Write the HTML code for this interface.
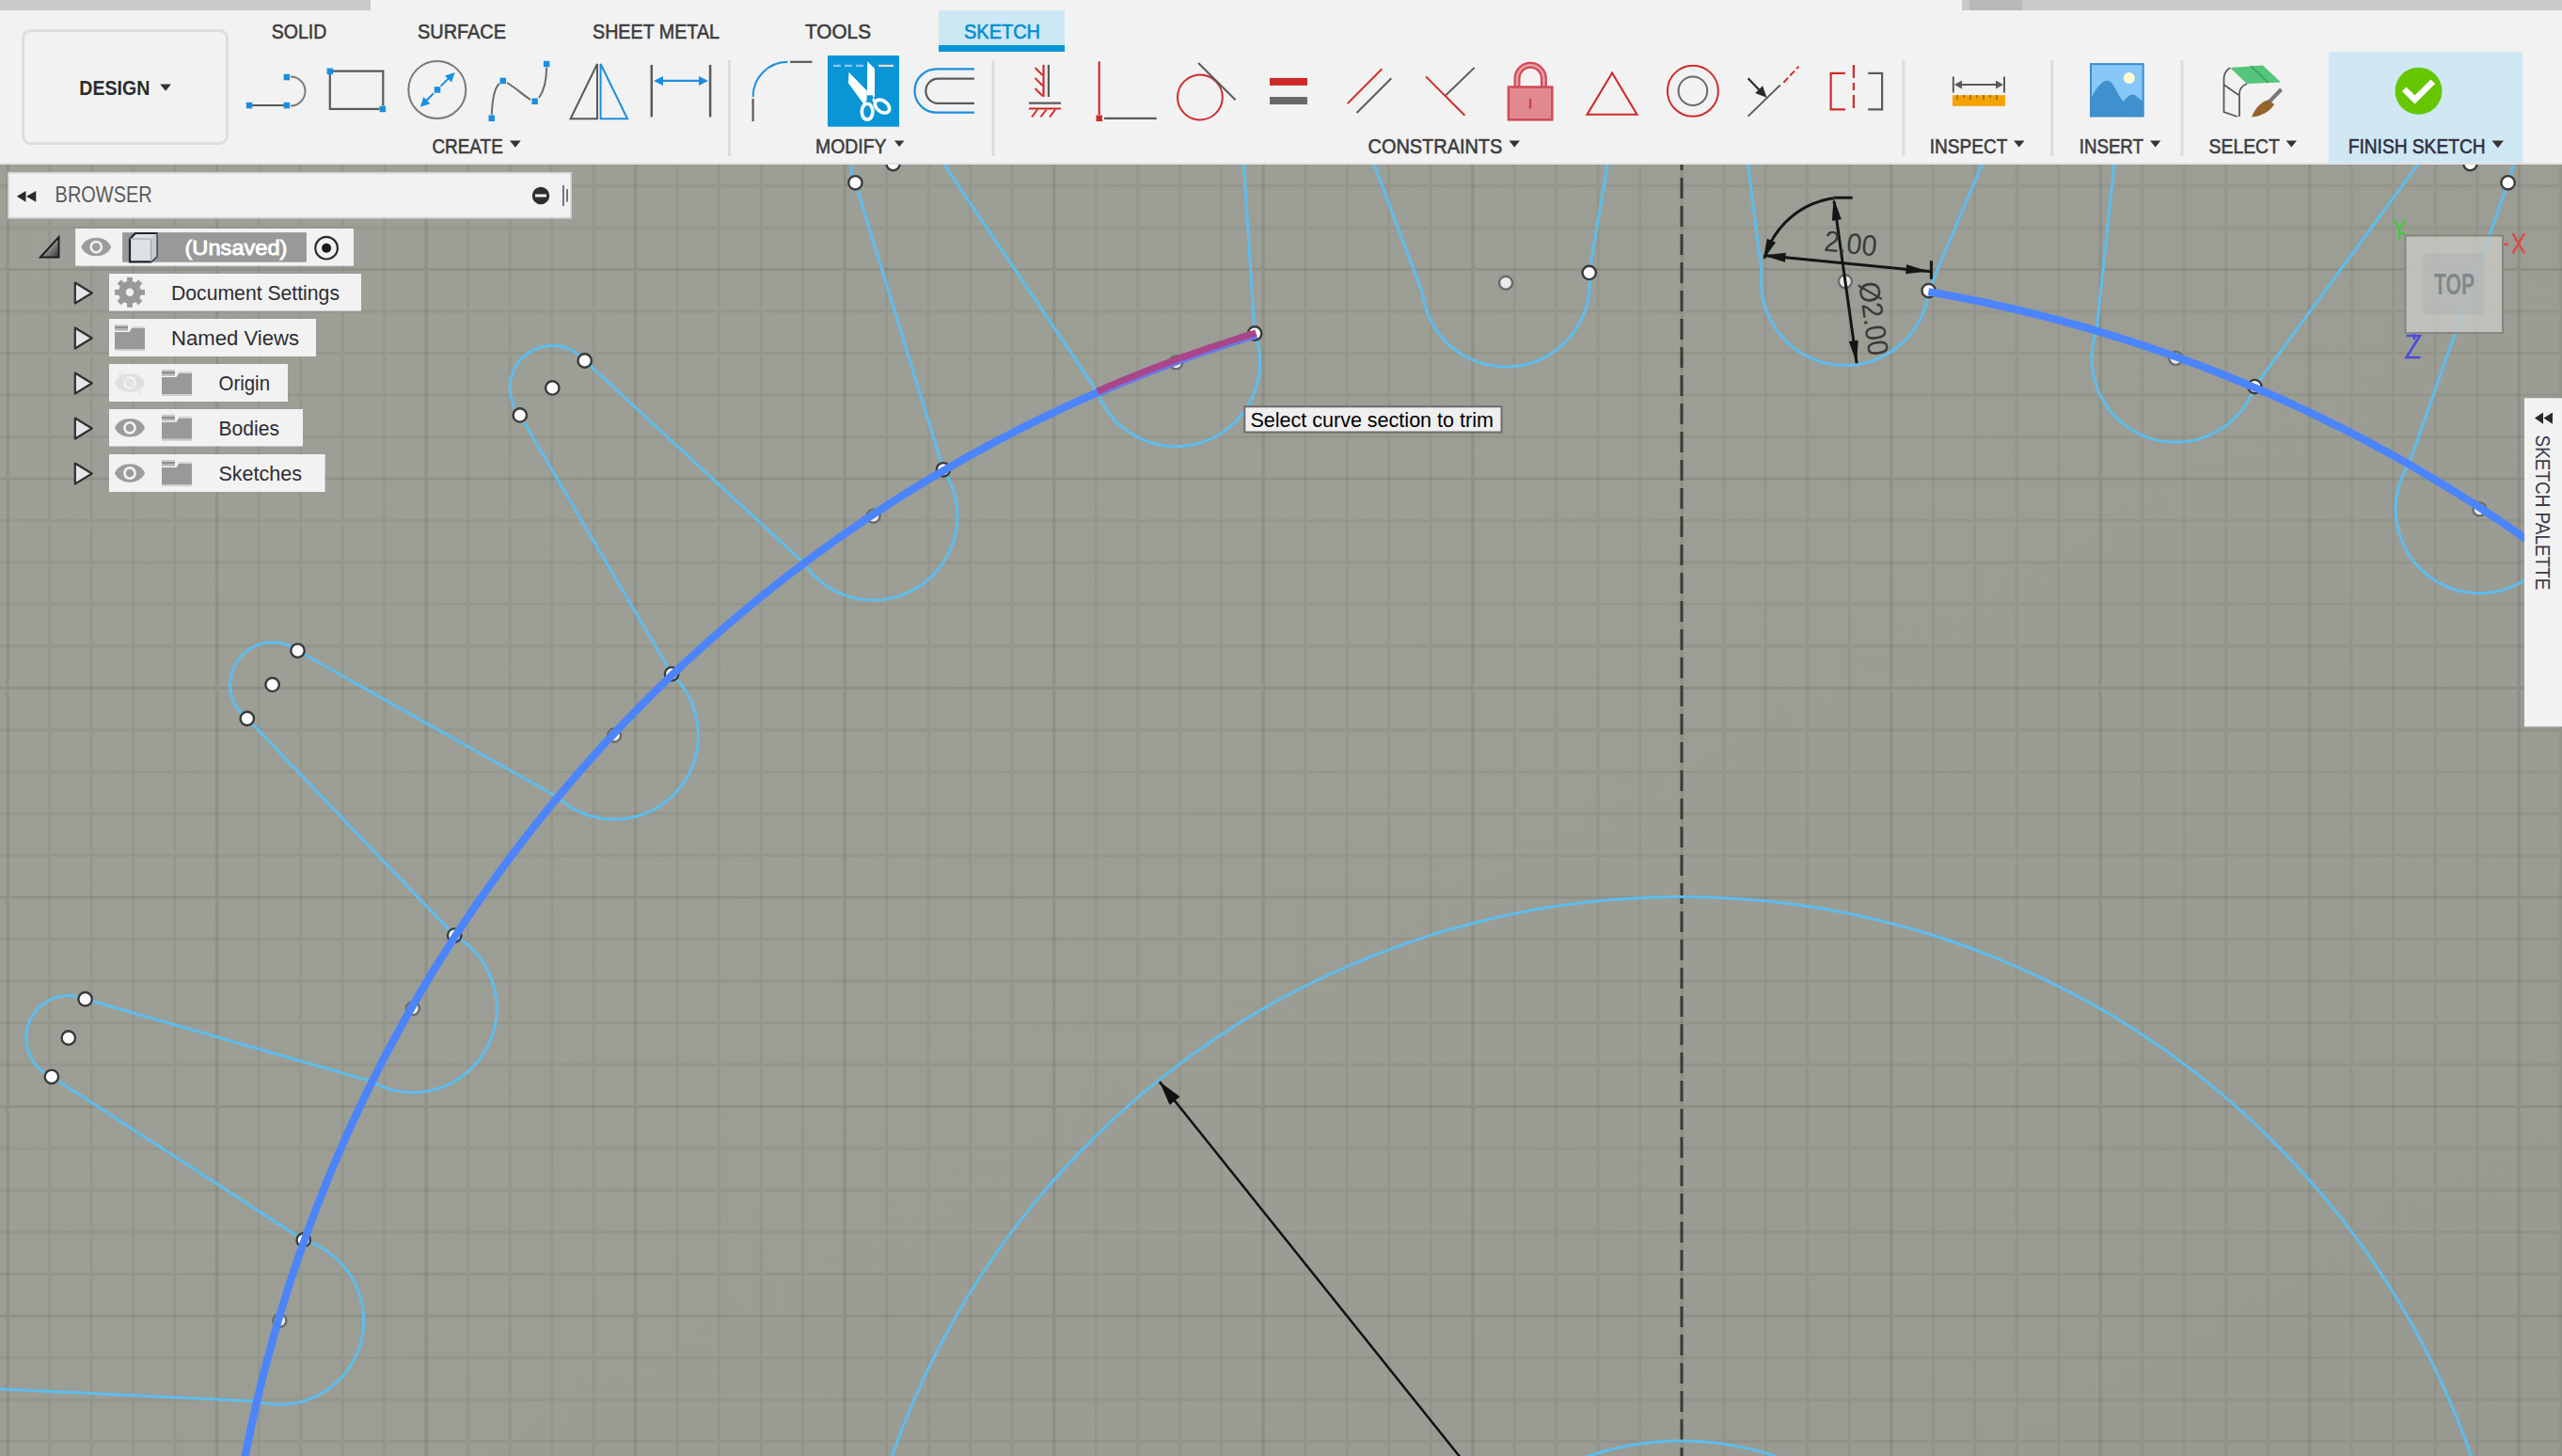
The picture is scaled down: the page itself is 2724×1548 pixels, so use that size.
<!DOCTYPE html><html><head><meta charset="utf-8"><style>
html,body{margin:0;padding:0;width:2724px;height:1548px;overflow:hidden;background:#9d9f96;}
svg{position:absolute;left:0;top:0;display:block}
text{font-family:"Liberation Sans",sans-serif}
</style></head><body>
<svg width="2724" height="1548" viewBox="0 0 2724 1548">
<defs><linearGradient id="cg" x1="0" y1="0" x2="1" y2="1"><stop offset="0" stop-color="#9da097"/><stop offset="0.5" stop-color="#9c9e95"/><stop offset="1" stop-color="#989a91"/></linearGradient></defs>
<rect x="0" y="0" width="2724" height="1548" fill="url(#cg)"/>
<path d="M52.7 175 V1548 M97.2 175 V1548 M141.7 175 V1548 M186.2 175 V1548 M275.2 175 V1548 M319.7 175 V1548 M364.2 175 V1548 M408.7 175 V1548 M497.7 175 V1548 M542.2 175 V1548 M586.7 175 V1548 M631.2 175 V1548 M720.2 175 V1548 M764.7 175 V1548 M809.2 175 V1548 M853.7 175 V1548 M942.7 175 V1548 M987.2 175 V1548 M1031.7 175 V1548 M1076.2 175 V1548 M1165.2 175 V1548 M1209.7 175 V1548 M1254.2 175 V1548 M1298.7 175 V1548 M1387.7 175 V1548 M1432.2 175 V1548 M1476.7 175 V1548 M1521.2 175 V1548 M1610.2 175 V1548 M1654.7 175 V1548 M1699.2 175 V1548 M1743.7 175 V1548 M1832.7 175 V1548 M1877.2 175 V1548 M1921.7 175 V1548 M1966.2 175 V1548 M2055.2 175 V1548 M2099.7 175 V1548 M2144.2 175 V1548 M2188.7 175 V1548 M2277.7 175 V1548 M2322.2 175 V1548 M2366.7 175 V1548 M2411.2 175 V1548 M2500.2 175 V1548 M2544.7 175 V1548 M2589.2 175 V1548 M2633.7 175 V1548 M2722.7 175 V1548 M0 197.5 H2724 M0 242 H2724 M0 331 H2724 M0 375.5 H2724 M0 420 H2724 M0 464.5 H2724 M0 553.5 H2724 M0 598 H2724 M0 642.5 H2724 M0 687 H2724 M0 776 H2724 M0 820.5 H2724 M0 865 H2724 M0 909.5 H2724 M0 998.5 H2724 M0 1043 H2724 M0 1087.5 H2724 M0 1132 H2724 M0 1221 H2724 M0 1265.5 H2724 M0 1310 H2724 M0 1354.5 H2724 M0 1443.5 H2724 M0 1488 H2724 M0 1532.5 H2724" stroke="rgba(10,25,5,0.056)" stroke-width="2.8" fill="none"/>
<path d="M8.2 175 V1548 M230.7 175 V1548 M453.2 175 V1548 M675.7 175 V1548 M898.2 175 V1548 M1120.7 175 V1548 M1343.2 175 V1548 M1565.7 175 V1548 M1788.2 175 V1548 M2010.7 175 V1548 M2233.2 175 V1548 M2455.7 175 V1548 M2678.2 175 V1548 M0 286.5 H2724 M0 509 H2724 M0 731.5 H2724 M0 954 H2724 M0 1176.5 H2724 M0 1399 H2724" stroke="rgba(10,25,5,0.09)" stroke-width="3.2" fill="none"/>
<path d="M1788 175 V1548" stroke="#3a3a38" stroke-width="3" stroke-dasharray="22 8" stroke-dashoffset="-14" fill="none"/>
<circle cx="1788" cy="1843.4" r="890" stroke="#5dbdee" stroke-width="3.0" fill="none"/>
<circle cx="1788" cy="1843.4" r="311.5" stroke="#5dbdee" stroke-width="3.0" fill="none"/>
<path d="M1788 1843.4 L1232.8 1150.1" stroke="#111" stroke-width="2.5"/>
<path d="M1232.8 1150.1 L1243.6 1174.8 L1254.5 1166 Z" fill="#111"/>
<path d="M2852.2 707.5 L2848.9 710.8 L2845.8 714.3 L2842.9 717.9 L2840.1 721.7 L2837.6 725.6 L2835.3 729.7 L2833.1 733.9 L2831.3 738.1 L2829.6 742.5 L2828.1 746.9 L2826.9 751.5 L2826 756 L2825.2 760.7 L2824.8 765.3 L2824.5 770 L2824.5 774.6 L2824.8 779.3 L2825.3 784 L2826 788.6 L2827 793.2 L2828.2 797.7 L2829.7 802.1 L2831.3 806.5 L2833.3 810.7 L2835.4 814.9 L2837.7 819 L2840.3 822.9 L2843 826.6 L2846 830.3 L2849.1 833.7 L2852.4 837 L2855.9 840.2 L2859.5 843.1 L2863.3 845.9 L2867.2 848.4 L2871.3 850.7 L2875.5 852.8 L2879.7 854.7 L2884.1 856.4 L2888.6 857.8 L2893.1 859.1 L2897.6 860 L2902.3 860.7 L2906.9 861.2 L2911.6 861.5 L2916.3 861.5 L2920.9 861.2 L2925.6 860.7 L2930.2 860 L2934.8 859 L2939.3 857.8 L2943.7 856.3 L2948.1 854.6 L2952.4 852.7 L2956.5 850.6 L2960.6 848.3 L2964.5 845.7 L2968.3 843 L2971.9 840 L2975.4 836.9 M2561.6 492.7 L2559.1 496.7 L2556.9 500.8 L2554.9 505 L2553.1 509.3 L2551.5 513.7 L2550.2 518.2 L2549.1 522.7 L2548.2 527.3 L2547.6 532 L2547.2 536.6 L2547.1 541.3 L2547.2 546 L2547.6 550.6 L2548.2 555.3 L2549 559.9 L2550.1 564.4 L2551.4 568.9 L2553 573.3 L2554.8 577.6 L2556.8 581.9 L2559 586 L2561.4 590 L2564.1 593.8 L2566.9 597.5 L2570 601.1 L2573.2 604.5 L2576.6 607.7 L2580.1 610.7 L2583.8 613.6 L2587.7 616.3 L2591.6 618.7 L2595.7 620.9 L2600 623 L2604.3 624.8 L2608.7 626.3 L2613.2 627.7 L2617.7 628.8 L2622.3 629.6 L2626.9 630.2 L2631.6 630.6 L2636.3 630.7 L2640.9 630.6 L2645.6 630.3 L2650.2 629.7 L2654.8 628.8 L2659.4 627.7 L2663.9 626.4 L2668.3 624.9 L2672.6 623.1 L2676.8 621.1 L2680.9 618.8 L2684.9 616.4 L2688.8 613.8 L2692.5 610.9 L2696.1 607.9 L2699.5 604.7 L2702.7 601.3 L2705.7 597.7 L2708.6 594 L2711.2 590.2 M2229.2 350.7 L2227.8 355.1 L2226.6 359.6 L2225.6 364.2 L2224.8 368.8 L2224.3 373.5 L2224 378.1 L2224 382.8 L2224.2 387.5 L2224.7 392.1 L2225.4 396.8 L2226.4 401.3 L2227.6 405.9 L2229 410.3 L2230.6 414.7 L2232.5 419 L2234.6 423.1 L2236.9 427.2 L2239.5 431.1 L2242.2 434.9 L2245.1 438.6 L2248.2 442.1 L2251.5 445.4 L2255 448.5 L2258.6 451.5 L2262.4 454.2 L2266.3 456.8 L2270.3 459.2 L2274.5 461.3 L2278.7 463.2 L2283.1 464.9 L2287.5 466.4 L2292.1 467.6 L2296.6 468.6 L2301.2 469.4 L2305.9 469.9 L2310.6 470.1 L2315.2 470.2 L2319.9 469.9 L2324.6 469.5 L2329.2 468.8 L2333.8 467.8 L2338.3 466.6 L2342.7 465.2 L2347.1 463.5 L2351.4 461.6 L2355.6 459.5 L2359.6 457.2 L2363.5 454.7 L2367.3 452 L2371 449 L2374.5 445.9 L2377.8 442.6 L2380.9 439.2 L2383.9 435.6 L2386.7 431.8 L2389.2 427.9 L2391.6 423.8 L2393.7 419.7 L2395.6 415.4 L2397.3 411.1 M1873.1 289.2 L1872.7 293.8 L1872.6 298.5 L1872.6 303.2 L1873 307.8 L1873.6 312.5 L1874.4 317.1 L1875.4 321.6 L1876.7 326.1 L1878.2 330.5 L1880 334.9 L1882 339.1 L1884.2 343.2 L1886.6 347.2 L1889.2 351.1 L1892 354.8 L1895 358.4 L1898.2 361.8 L1901.6 365.1 L1905.1 368.1 L1908.8 371 L1912.7 373.7 L1916.6 376.2 L1920.7 378.4 L1924.9 380.5 L1929.2 382.3 L1933.6 383.9 L1938.1 385.2 L1942.6 386.4 L1947.2 387.3 L1951.9 387.9 L1956.5 388.3 L1961.2 388.5 L1965.9 388.4 L1970.5 388 L1975.2 387.5 L1979.8 386.6 L1984.3 385.6 L1988.8 384.3 L1993.2 382.8 L1997.6 381 L2001.8 379 L2005.9 376.8 L2009.9 374.4 L2013.8 371.8 L2017.5 369 L2021.1 366 L2024.5 362.8 L2027.8 359.4 L2030.8 355.9 L2033.7 352.2 L2036.4 348.3 L2038.9 344.4 L2041.1 340.3 L2043.2 336.1 L2045 331.8 L2046.6 327.4 L2047.9 322.9 L2049.1 318.4 L2049.9 313.8 L2050.6 309.1 M1512.4 311.4 L1513.1 316.1 L1514 320.6 L1515.2 325.2 L1516.6 329.6 L1518.2 334 L1520 338.3 L1522.1 342.5 L1524.4 346.6 L1526.9 350.5 L1529.6 354.3 L1532.5 358 L1535.6 361.5 L1538.9 364.8 L1542.3 368 L1545.9 371 L1549.7 373.8 L1553.6 376.3 L1557.6 378.7 L1561.8 380.9 L1566 382.8 L1570.4 384.6 L1574.8 386 L1579.3 387.3 L1583.9 388.3 L1588.5 389.1 L1593.1 389.6 L1597.8 389.9 L1602.5 390 L1607.1 389.8 L1611.8 389.3 L1616.4 388.7 L1621 387.7 L1625.5 386.6 L1630 385.2 L1634.4 383.5 L1638.7 381.7 L1642.8 379.6 L1646.9 377.3 L1650.9 374.8 L1654.7 372.1 L1658.3 369.2 L1661.8 366.1 L1665.2 362.8 L1668.3 359.4 L1671.3 355.8 L1674.1 352 L1676.7 348.1 L1679.1 344.1 L1681.2 340 L1683.2 335.7 L1684.9 331.4 L1686.4 326.9 L1687.7 322.4 L1688.7 317.9 L1689.4 313.3 L1690 308.6 L1690.3 303.9 L1690.3 299.3 L1690.1 294.6 L1689.7 289.9 M1166.5 416.3 L1168.3 420.6 L1170.2 424.9 L1172.4 429 L1174.8 433 L1177.4 436.9 L1180.2 440.7 L1183.2 444.3 L1186.3 447.7 L1189.7 451 L1193.2 454 L1196.9 456.9 L1200.7 459.6 L1204.6 462.1 L1208.7 464.4 L1212.9 466.5 L1217.2 468.3 L1221.6 469.9 L1226.1 471.3 L1230.6 472.5 L1235.2 473.4 L1239.8 474.1 L1244.5 474.5 L1249.1 474.7 L1253.8 474.6 L1258.5 474.3 L1263.1 473.8 L1267.7 473 L1272.3 471.9 L1276.8 470.7 L1281.2 469.2 L1285.5 467.4 L1289.8 465.5 L1293.9 463.3 L1297.9 460.9 L1301.8 458.3 L1305.6 455.5 L1309.2 452.5 L1312.6 449.4 L1315.9 446 L1319 442.5 L1321.8 438.8 L1324.5 435 L1327 431.1 L1329.3 427 L1331.4 422.8 L1333.2 418.5 L1334.9 414.1 L1336.2 409.6 L1337.4 405.1 L1338.3 400.5 L1339 395.9 L1339.4 391.2 L1339.6 386.6 L1339.5 381.9 L1339.2 377.2 L1338.7 372.6 L1337.9 368 L1336.9 363.4 L1335.6 358.9 L1334.1 354.5 M854.2 598.1 L856.8 601.9 L859.7 605.6 L862.8 609.1 L866.1 612.5 L869.5 615.7 L873.1 618.7 L876.8 621.5 L880.7 624.1 L884.7 626.5 L888.8 628.7 L893.1 630.6 L897.4 632.4 L901.8 633.9 L906.3 635.2 L910.9 636.2 L915.5 637 L920.1 637.6 L924.8 637.9 L929.5 638 L934.1 637.8 L938.8 637.4 L943.4 636.7 L948 635.8 L952.5 634.7 L957 633.3 L961.4 631.7 L965.7 629.9 L969.9 627.8 L974 625.6 L977.9 623.1 L981.8 620.4 L985.5 617.5 L989 614.4 L992.3 611.2 L995.5 607.8 L998.5 604.2 L1001.3 600.4 L1003.9 596.6 L1006.3 592.6 L1008.5 588.4 L1010.5 584.2 L1012.2 579.9 L1013.8 575.4 L1015 570.9 L1016.1 566.4 L1016.9 561.8 L1017.5 557.1 L1017.8 552.5 L1017.9 547.8 L1017.7 543.1 L1017.3 538.5 L1016.6 533.8 L1015.7 529.2 L1014.6 524.7 L1013.2 520.2 L1011.6 515.9 L1009.8 511.5 L1007.7 507.4 L1005.4 503.3 L1003 499.3 M592.1 847 L595.6 850.1 L599.3 853 L603.1 855.7 L607 858.3 L611.1 860.6 L615.3 862.7 L619.6 864.5 L623.9 866.2 L628.4 867.6 L632.9 868.8 L637.5 869.7 L642.1 870.4 L646.8 870.9 L651.4 871.1 L656.1 871 L660.8 870.8 L665.4 870.2 L670 869.5 L674.6 868.5 L679.1 867.2 L683.6 865.8 L687.9 864 L692.2 862.1 L696.3 860 L700.3 857.6 L704.2 855 L708 852.2 L711.6 849.3 L715.1 846.1 L718.4 842.8 L721.5 839.3 L724.4 835.6 L727.1 831.8 L729.6 827.9 L731.9 823.8 L734 819.7 L735.9 815.4 L737.5 811 L738.9 806.5 L740.1 802 L741.1 797.4 L741.8 792.8 L742.2 788.2 L742.4 783.5 L742.4 778.8 L742.1 774.1 L741.6 769.5 L740.8 764.9 L739.8 760.3 L738.6 755.8 L737.1 751.4 L735.4 747 L733.5 742.8 L731.3 738.6 L728.9 734.6 L726.4 730.7 L723.6 726.9 L720.6 723.3 L717.5 719.9 L714.1 716.6 M394.6 1149.6 L398.7 1151.9 L402.9 1153.9 L407.3 1155.6 L411.7 1157.2 L416.2 1158.5 L420.7 1159.5 L425.3 1160.4 L430 1161 L434.6 1161.3 L439.3 1161.4 L444 1161.3 L448.6 1160.9 L453.3 1160.3 L457.8 1159.4 L462.4 1158.3 L466.9 1156.9 L471.3 1155.4 L475.6 1153.5 L479.8 1151.5 L483.9 1149.3 L487.9 1146.8 L491.7 1144.1 L495.4 1141.3 L498.9 1138.2 L502.3 1135 L505.5 1131.6 L508.5 1128 L511.4 1124.3 L514 1120.4 L516.4 1116.4 L518.6 1112.3 L520.6 1108.1 L522.4 1103.8 L524 1099.4 L525.3 1094.9 L526.3 1090.3 L527.2 1085.7 L527.8 1081.1 L528.1 1076.4 L528.2 1071.7 L528.1 1067.1 L527.7 1062.4 L527 1057.8 L526.2 1053.2 L525.1 1048.6 L523.7 1044.2 L522.1 1039.8 L520.3 1035.5 L518.3 1031.2 L516.1 1027.1 L513.6 1023.2 L510.9 1019.3 L508.1 1015.6 L505 1012.1 L501.8 1008.7 L498.4 1005.5 L494.8 1002.5 L491.1 999.7 L487.2 997 L483.2 994.6 M272.2 1489.7 L276.7 1490.9 L281.2 1491.9 L285.9 1492.6 L290.5 1493.1 L295.2 1493.3 L299.9 1493.3 L304.5 1493 L309.2 1492.6 L313.8 1491.8 L318.4 1490.8 L322.9 1489.6 L327.3 1488.2 L331.7 1486.5 L336 1484.6 L340.1 1482.5 L344.2 1480.1 L348.1 1477.6 L351.9 1474.8 L355.5 1471.9 L359 1468.7 L362.3 1465.4 L365.4 1461.9 L368.3 1458.3 L371.1 1454.5 L373.6 1450.6 L375.9 1446.5 L378.1 1442.4 L380 1438.1 L381.6 1433.7 L383.1 1429.3 L384.3 1424.8 L385.2 1420.2 L386 1415.6 L386.4 1410.9 L386.7 1406.3 L386.7 1401.6 L386.4 1396.9 L385.9 1392.3 L385.2 1387.6 L384.2 1383.1 L383 1378.6 L381.5 1374.1 L379.9 1369.8 L378 1365.5 L375.8 1361.3 L373.5 1357.3 L370.9 1353.4 L368.2 1349.6 L365.2 1345.9 L362.1 1342.5 L358.8 1339.2 L355.3 1336.1 L351.7 1333.1 L347.9 1330.4 L344 1327.8 L339.9 1325.5 L335.7 1323.4 L331.5 1321.5 L327.1 1319.8 L322.7 1318.4 M231.4 1848.8 L236.1 1848.9 L240.8 1848.8 L245.5 1848.5 L250.1 1847.9 L254.7 1847 L259.2 1845.9 L263.7 1844.6 L268.1 1843.1 L272.5 1841.3 L276.7 1839.3 L280.8 1837 L284.8 1834.6 L288.6 1832 L292.3 1829.1 L295.9 1826.1 L299.3 1822.9 L302.5 1819.5 L305.6 1815.9 L308.4 1812.2 L311.1 1808.4 L313.5 1804.4 L315.8 1800.3 L317.8 1796.1 L319.6 1791.8 L321.1 1787.4 L322.5 1782.9 L323.6 1778.3 L324.4 1773.7 L325.1 1769.1 L325.4 1764.4 L325.6 1759.8 L325.4 1755.1 L325.1 1750.4 L324.5 1745.8 L323.6 1741.2 L322.6 1736.7 L321.2 1732.2 L319.7 1727.8 L317.9 1723.4 L315.9 1719.2 L313.7 1715.1 L311.2 1711.1 L308.6 1707.3 L305.7 1703.5 L302.7 1700 L299.5 1696.6 L296.1 1693.4 L292.6 1690.3 L288.9 1687.5 L285 1684.8 L281 1682.4 L276.9 1680.1 L272.7 1678.1 L268.4 1676.3 L264 1674.7 L259.5 1673.4 L255 1672.3 L250.4 1671.5 L245.7 1670.8 L241.1 1670.5 M274.6 2207.6 L279.2 2206.7 L283.7 2205.5 L288.2 2204.1 L292.6 2202.4 L296.9 2200.5 L301 2198.4 L305.1 2196.1 L309 2193.6 L312.8 2190.8 L316.5 2187.9 L319.9 2184.8 L323.3 2181.5 L326.4 2178 L329.4 2174.4 L332.1 2170.7 L334.7 2166.7 L337.1 2162.7 L339.2 2158.6 L341.1 2154.3 L342.8 2149.9 L344.3 2145.5 L345.5 2141 L346.5 2136.4 L347.3 2131.8 L347.8 2127.2 L348 2122.5 L348 2117.8 L347.8 2113.1 L347.4 2108.5 L346.6 2103.9 L345.7 2099.3 L344.5 2094.8 L343.1 2090.3 L341.4 2085.9 L339.5 2081.7 L337.4 2077.5 L335.1 2073.4 L332.6 2069.5 L329.9 2065.7 L326.9 2062.1 L323.8 2058.6 L320.5 2055.2 L317.1 2052.1 L313.4 2049.1 L309.7 2046.4 L305.8 2043.8 L301.7 2041.5 L297.6 2039.3 L293.3 2037.4 L289 2035.7 L284.5 2034.2 L280 2033 L275.4 2032 L270.8 2031.3 L266.2 2030.8 L261.5 2030.5 L256.8 2030.5 L252.2 2030.7 L247.5 2031.2 L242.9 2031.9 M3259.5 691.8 L3262.4 689.8 L3265.5 688.1 L3268.7 686.5 L3272 685.3 L3275.4 684.3 L3278.8 683.5 L3282.3 683.1 L3285.8 682.9 L3289.4 683 L3292.9 683.4 L3296.4 684 L3299.8 685 L3303.1 686.1 L3306.3 687.6 L3309.4 689.3 L3312.4 691.2 L3315.2 693.4 L3317.8 695.7 L3320.2 698.3 L3322.5 701 L3324.5 704 L3326.2 707 L3327.7 710.2 L3329 713.5 L3330 716.9 L3330.7 720.4 L3331.2 723.9 L3331.4 727.4 L3331.3 730.9 L3330.9 734.4 L3330.2 737.9 L3329.3 741.3 L3328.1 744.6 L3326.7 747.9 L3325 751 L3323.1 753.9 L3320.9 756.7 L3318.6 759.4 L3316 761.8 L3313.2 764 M2954.3 383.5 L2956.6 380.9 L2959.2 378.5 L2962 376.3 L2964.9 374.3 L2967.9 372.5 L2971.1 371 L2974.4 369.8 L2977.8 368.8 L2981.3 368 L2984.8 367.6 L2988.3 367.4 L2991.9 367.5 L2995.4 367.9 L2998.9 368.6 L3002.3 369.5 L3005.6 370.7 L3008.8 372.2 L3011.9 373.9 L3014.9 375.8 L3017.7 378 L3020.3 380.3 L3022.7 382.9 L3024.9 385.7 L3026.9 388.6 L3028.6 391.7 L3030.1 394.8 L3031.4 398.2 L3032.4 401.5 L3033.1 405 L3033.6 408.5 L3033.7 412 L3033.6 415.6 L3033.2 419.1 L3032.6 422.6 L3031.6 426 L3030.5 429.3 L3029 432.5 L3027.3 435.6 L3025.4 438.6 L3023.2 441.4 M2586.1 153.9 L2587.9 150.8 L2589.8 147.9 L2592 145.1 L2594.4 142.5 L2596.9 140 L2599.7 137.8 L2602.6 135.9 L2605.7 134.1 L2608.9 132.6 L2612.2 131.4 L2615.6 130.4 L2619.1 129.7 L2622.6 129.3 L2626.1 129.1 L2629.6 129.2 L2633.1 129.6 L2636.6 130.3 L2640 131.2 L2643.3 132.4 L2646.6 133.9 L2649.6 135.6 L2652.6 137.5 L2655.4 139.7 L2658 142.1 L2660.4 144.7 L2662.6 147.4 L2664.6 150.4 L2666.3 153.4 L2667.8 156.6 L2669.1 159.9 L2670.1 163.3 L2670.8 166.8 L2671.2 170.3 L2671.4 173.8 L2671.2 177.4 L2670.8 180.9 L2670.2 184.3 L2669.2 187.8 L2668 191.1 L2666.6 194.3 M2175 15.4 L2176 12 L2177.2 8.7 L2178.6 5.4 L2180.4 2.4 L2182.3 -0.6 L2184.5 -3.4 L2186.9 -6 L2189.5 -8.4 L2192.2 -10.6 L2195.2 -12.5 L2198.2 -14.3 L2201.4 -15.8 L2204.8 -17 L2208.2 -18 L2211.6 -18.7 L2215.1 -19.1 L2218.7 -19.2 L2222.2 -19.1 L2225.7 -18.7 L2229.2 -18 L2232.6 -17.1 L2235.9 -15.9 L2239.1 -14.4 L2242.2 -12.7 L2245.1 -10.7 L2247.9 -8.6 L2250.5 -6.2 L2252.9 -3.6 L2255.1 -0.8 L2257.1 2.1 L2258.8 5.2 L2260.3 8.4 L2261.5 11.7 L2262.5 15.1 L2263.2 18.6 L2263.6 22.1 L2263.8 25.6 L2263.7 29.2 L2263.3 32.7 L2262.6 36.1 M1743 -24.6 L1743.1 -28.1 L1743.6 -31.6 L1744.2 -35.1 L1745.2 -38.5 L1746.4 -41.8 L1747.9 -45 L1749.6 -48.1 L1751.6 -51.1 L1753.8 -53.8 L1756.2 -56.4 L1758.8 -58.8 L1761.5 -61 L1764.5 -63 L1767.6 -64.7 L1770.8 -66.2 L1774.1 -67.4 L1777.5 -68.4 L1781 -69 L1784.5 -69.5 L1788 -69.6 L1791.5 -69.5 L1795 -69 L1798.5 -68.4 L1801.9 -67.4 L1805.2 -66.2 L1808.4 -64.7 L1811.5 -63 L1814.5 -61 L1817.2 -58.8 L1819.8 -56.4 L1822.2 -53.8 L1824.4 -51.1 L1826.4 -48.1 L1828.1 -45 L1829.6 -41.8 L1830.8 -38.5 L1831.8 -35.1 L1832.4 -31.6 L1832.9 -28.1 L1833 -24.6 M1313.4 36.1 L1312.7 32.7 L1312.3 29.2 L1312.2 25.6 L1312.4 22.1 L1312.8 18.6 L1313.5 15.1 L1314.5 11.7 L1315.7 8.4 L1317.2 5.2 L1318.9 2.1 L1320.9 -0.8 L1323.1 -3.6 L1325.5 -6.2 L1328.1 -8.6 L1330.9 -10.7 L1333.8 -12.7 L1336.9 -14.4 L1340.1 -15.9 L1343.4 -17.1 L1346.8 -18 L1350.3 -18.7 L1353.8 -19.1 L1357.3 -19.2 L1360.9 -19.1 L1364.4 -18.7 L1367.8 -18 L1371.2 -17 L1374.6 -15.8 L1377.8 -14.3 L1380.8 -12.5 L1383.8 -10.6 L1386.5 -8.4 L1389.1 -6 L1391.5 -3.4 L1393.7 -0.6 L1395.6 2.4 L1397.4 5.4 L1398.8 8.7 L1400 12 L1401 15.4 M909.4 194.3 L908 191.1 L906.8 187.8 L905.8 184.3 L905.2 180.9 L904.8 177.4 L904.6 173.8 L904.8 170.3 L905.2 166.8 L905.9 163.3 L906.9 159.9 L908.2 156.6 L909.7 153.4 L911.4 150.4 L913.4 147.4 L915.6 144.7 L918 142.1 L920.6 139.7 L923.4 137.5 L926.4 135.6 L929.4 133.9 L932.7 132.4 L936 131.2 L939.4 130.3 L942.9 129.6 L946.4 129.2 L949.9 129.1 L953.4 129.3 L956.9 129.7 L960.4 130.4 L963.8 131.4 L967.1 132.6 L970.3 134.1 L973.4 135.9 L976.3 137.8 L979.1 140 L981.6 142.5 L984 145.1 L986.2 147.9 L988.1 150.8 L989.9 153.9 M552.8 441.4 L550.6 438.6 L548.7 435.6 L547 432.5 L545.5 429.3 L544.4 426 L543.4 422.6 L542.8 419.1 L542.4 415.6 L542.3 412 L542.4 408.5 L542.9 405 L543.6 401.5 L544.6 398.2 L545.9 394.8 L547.4 391.7 L549.1 388.6 L551.1 385.7 L553.3 382.9 L555.7 380.3 L558.3 378 L561.1 375.8 L564.1 373.9 L567.2 372.2 L570.4 370.7 L573.7 369.5 L577.1 368.6 L580.6 367.9 L584.1 367.5 L587.7 367.4 L591.2 367.6 L594.7 368 L598.2 368.8 L601.6 369.8 L604.9 371 L608.1 372.5 L611.1 374.3 L614 376.3 L616.8 378.5 L619.4 380.9 L621.7 383.5 M262.8 764 L260 761.8 L257.4 759.4 L255.1 756.7 L252.9 753.9 L251 751 L249.3 747.9 L247.9 744.6 L246.7 741.3 L245.8 737.9 L245.1 734.4 L244.7 730.9 L244.6 727.4 L244.8 723.9 L245.3 720.4 L246 716.9 L247 713.5 L248.3 710.2 L249.8 707 L251.5 704 L253.5 701 L255.8 698.3 L258.2 695.7 L260.8 693.4 L263.6 691.2 L266.6 689.3 L269.7 687.6 L272.9 686.1 L276.2 685 L279.6 684 L283.1 683.4 L286.6 683 L290.2 682.9 L293.7 683.1 L297.2 683.5 L300.6 684.3 L304 685.3 L307.3 686.5 L310.5 688.1 L313.6 689.8 L316.5 691.8 M54.9 1144.8 L51.8 1143.3 L48.7 1141.5 L45.8 1139.5 L43.1 1137.3 L40.5 1134.9 L38.1 1132.2 L36 1129.4 L34.1 1126.5 L32.4 1123.4 L31 1120.1 L29.8 1116.8 L28.9 1113.4 L28.2 1109.9 L27.9 1106.4 L27.8 1102.9 L28 1099.3 L28.4 1095.8 L29.2 1092.4 L30.2 1089 L31.5 1085.7 L33 1082.5 L34.7 1079.5 L36.8 1076.5 L39 1073.8 L41.4 1071.2 L44 1068.9 L46.9 1066.7 L49.8 1064.8 L52.9 1063.1 L56.2 1061.7 L59.5 1060.5 L62.9 1059.6 L66.4 1059 L69.9 1058.6 L73.4 1058.5 L77 1058.7 L80.5 1059.2 L83.9 1059.9 L87.3 1060.9 L90.6 1062.2 M-59.4 1563.3 L-62.9 1562.6 L-66.3 1561.6 L-69.6 1560.3 L-72.7 1558.8 L-75.8 1557 L-78.7 1555 L-81.4 1552.7 L-84 1550.3 L-86.3 1547.6 L-88.5 1544.8 L-90.4 1541.9 L-92.1 1538.8 L-93.5 1535.5 L-94.7 1532.2 L-95.6 1528.8 L-96.2 1525.3 L-96.5 1521.8 L-96.6 1518.2 L-96.4 1514.7 L-95.9 1511.2 L-95.2 1507.8 L-94.2 1504.4 L-92.9 1501.1 L-91.4 1497.9 L-89.6 1494.8 L-87.6 1491.9 L-85.3 1489.2 L-82.9 1486.7 L-80.2 1484.3 L-77.4 1482.2 L-74.5 1480.3 L-71.3 1478.6 L-68.1 1477.2 L-64.8 1476 L-61.4 1475.1 L-57.9 1474.5 L-54.4 1474.1 L-50.8 1474 L-47.3 1474.2 L-43.8 1474.7 M-74.2 1996.9 L-77.8 1997 L-81.3 1996.8 L-84.8 1996.3 L-88.2 1995.5 L-91.6 1994.5 L-94.9 1993.2 L-98.1 1991.7 L-101.1 1989.9 L-104 1987.9 L-106.8 1985.6 L-109.3 1983.2 L-111.6 1980.5 L-113.8 1977.7 L-115.7 1974.7 L-117.3 1971.6 L-118.8 1968.4 L-119.9 1965 L-120.8 1961.6 L-121.4 1958.1 L-121.8 1954.6 L-121.8 1951.1 L-121.6 1947.6 L-121.1 1944.1 L-120.4 1940.6 L-119.3 1937.2 L-118.1 1934 L-116.5 1930.8 L-114.7 1927.7 L-112.7 1924.8 L-110.5 1922.1 L-108 1919.6 L-105.4 1917.2 L-102.5 1915.1 L-99.6 1913.2 L-96.4 1911.5 L-93.2 1910.1 L-89.9 1908.9 L-86.5 1908.1 L-83 1907.4 L-79.5 1907.1 M11.4 2422.3 L8 2423.1 L4.5 2423.7 L1 2424.1 L-2.6 2424.1 L-6.1 2423.9 L-9.6 2423.4 L-13 2422.6 L-16.4 2421.6 L-19.7 2420.3 L-22.9 2418.8 L-25.9 2417 L-28.8 2414.9 L-31.5 2412.7 L-34.1 2410.2 L-36.4 2407.6 L-38.5 2404.7 L-40.4 2401.8 L-42.1 2398.6 L-43.5 2395.4 L-44.6 2392.1 L-45.5 2388.6 L-46.1 2385.2 L-46.5 2381.6 L-46.5 2378.1 L-46.3 2374.6 L-45.8 2371.1 L-45 2367.6 L-44 2364.3 L-42.7 2361 L-41.1 2357.8 L-39.3 2354.7 L-37.3 2351.9 L-35.1 2349.1 L-32.6 2346.6 L-29.9 2344.3 L-27.1 2342.1 L-24.1 2340.2 L-21 2338.6 L-17.8 2337.2 L-14.4 2336 M2975.4 836.9 L3259.5 691.8 M2852.2 707.5 L3023.2 441.4 M2711.2 590.2 L2954.3 383.5 M2561.6 492.7 L2666.6 194.3 M2397.3 411.1 L2586.1 153.9 M2229.2 350.7 L2262.6 36.1 M2050.6 309.1 L2175 15.4 M1873.1 289.2 L1833 -24.6 M1689.7 289.9 L1743 -24.6 M1512.4 311.4 L1401 15.4 M1334.1 354.5 L1313.4 36.1 M1166.5 416.3 L989.9 153.9 M1003 499.3 L909.4 194.3 M854.2 598.1 L621.7 383.5 M714.1 716.6 L552.8 441.4 M592.1 847 L316.5 691.8 M483.2 994.6 L262.8 764 M394.6 1149.6 L90.6 1062.2 M322.7 1318.4 L54.9 1144.8 M272.2 1489.7 L-43.8 1474.7 M241.1 1670.5 L-59.4 1563.3 M231.4 1848.8 L-79.5 1907.1 M242.9 2031.9 L-74.2 1996.9 M274.6 2207.6 L-14.4 2336" stroke="#5dbdee" stroke-width="3.0" fill="none" stroke-linejoin="round"/>
<circle cx="2626.4" cy="174.1" r="7.2" fill="#fbfbfb" stroke="#3a3a3a" stroke-width="2.4"/>
<circle cx="2666.6" cy="194.3" r="7.2" fill="#fbfbfb" stroke="#3a3a3a" stroke-width="2.4"/>
<circle cx="949.6" cy="174.1" r="7.2" fill="#fbfbfb" stroke="#3a3a3a" stroke-width="2.4"/>
<circle cx="909.4" cy="194.3" r="7.2" fill="#fbfbfb" stroke="#3a3a3a" stroke-width="2.4"/>
<circle cx="587.3" cy="412.4" r="7.2" fill="#fbfbfb" stroke="#3a3a3a" stroke-width="2.4"/>
<circle cx="552.8" cy="441.4" r="7.2" fill="#fbfbfb" stroke="#3a3a3a" stroke-width="2.4"/>
<circle cx="621.7" cy="383.5" r="7.2" fill="#fbfbfb" stroke="#3a3a3a" stroke-width="2.4"/>
<circle cx="289.6" cy="727.9" r="7.2" fill="#fbfbfb" stroke="#3a3a3a" stroke-width="2.4"/>
<circle cx="262.8" cy="764" r="7.2" fill="#fbfbfb" stroke="#3a3a3a" stroke-width="2.4"/>
<circle cx="316.5" cy="691.8" r="7.2" fill="#fbfbfb" stroke="#3a3a3a" stroke-width="2.4"/>
<circle cx="72.8" cy="1103.5" r="7.2" fill="#fbfbfb" stroke="#3a3a3a" stroke-width="2.4"/>
<circle cx="54.9" cy="1144.8" r="7.2" fill="#fbfbfb" stroke="#3a3a3a" stroke-width="2.4"/>
<circle cx="90.6" cy="1062.2" r="7.2" fill="#fbfbfb" stroke="#3a3a3a" stroke-width="2.4"/>
<circle cx="2636.4" cy="541.4" r="7" fill="#ebebeb" stroke="#6a6a6a" stroke-width="2.4"/>
<circle cx="2711.2" cy="590.2" r="7.2" fill="#fbfbfb" stroke="#3a3a3a" stroke-width="2.4"/>
<circle cx="2313.3" cy="380.9" r="7" fill="#ebebeb" stroke="#6a6a6a" stroke-width="2.4"/>
<circle cx="2397.3" cy="411.1" r="7.2" fill="#fbfbfb" stroke="#3a3a3a" stroke-width="2.4"/>
<circle cx="1961.9" cy="299.2" r="7" fill="#ebebeb" stroke="#6a6a6a" stroke-width="2.4"/>
<circle cx="2050.6" cy="309.1" r="7.2" fill="#fbfbfb" stroke="#3a3a3a" stroke-width="2.4"/>
<circle cx="1601" cy="300.7" r="7" fill="#ebebeb" stroke="#6a6a6a" stroke-width="2.4"/>
<circle cx="1689.7" cy="289.9" r="7.2" fill="#fbfbfb" stroke="#3a3a3a" stroke-width="2.4"/>
<circle cx="1250.3" cy="385.4" r="7" fill="#ebebeb" stroke="#6a6a6a" stroke-width="2.4"/>
<circle cx="1334.1" cy="354.5" r="7.2" fill="#fbfbfb" stroke="#3a3a3a" stroke-width="2.4"/>
<circle cx="928.6" cy="548.7" r="7" fill="#ebebeb" stroke="#6a6a6a" stroke-width="2.4"/>
<circle cx="1003" cy="499.3" r="7.2" fill="#fbfbfb" stroke="#3a3a3a" stroke-width="2.4"/>
<circle cx="653.1" cy="781.8" r="7" fill="#ebebeb" stroke="#6a6a6a" stroke-width="2.4"/>
<circle cx="714.1" cy="716.6" r="7.2" fill="#fbfbfb" stroke="#3a3a3a" stroke-width="2.4"/>
<circle cx="438.9" cy="1072.1" r="7" fill="#ebebeb" stroke="#6a6a6a" stroke-width="2.4"/>
<circle cx="483.2" cy="994.6" r="7.2" fill="#fbfbfb" stroke="#3a3a3a" stroke-width="2.4"/>
<circle cx="297.4" cy="1404" r="7" fill="#ebebeb" stroke="#6a6a6a" stroke-width="2.4"/>
<circle cx="322.7" cy="1318.4" r="7.2" fill="#fbfbfb" stroke="#3a3a3a" stroke-width="2.4"/>
<path d="M247.6 1626.9 L248.6 1620.4 L249.5 1613.8 L250.5 1607.3 L251.5 1600.7 L252.6 1594.2 L253.7 1587.7 L254.8 1581.2 L255.9 1574.7 L257 1568.1 L258.2 1561.6 L259.4 1555.1 L260.7 1548.6 L262 1542.1 L263.2 1535.7 L264.6 1529.2 L265.9 1522.7 L267.3 1516.2 L268.7 1509.8 L270.1 1503.3 L271.6 1496.9 L273.1 1490.4 L274.6 1484 L276.1 1477.5 L277.7 1471.1 L279.3 1464.7 L280.9 1458.3 L282.6 1451.9 L284.3 1445.5 L286 1439.1 L287.7 1432.7 L289.5 1426.3 L291.2 1420 L293.1 1413.6 L294.9 1407.3 L296.8 1400.9 L298.7 1394.6 L300.6 1388.2 L302.5 1381.9 L304.5 1375.6 L306.5 1369.3 L308.5 1363 L310.6 1356.7 L312.7 1350.5 L314.8 1344.2 L316.9 1337.9 L319.1 1331.7 L321.3 1325.4 L323.5 1319.2 L325.7 1313 L328 1306.8 L330.3 1300.6 L332.6 1294.4 L335 1288.2 L337.3 1282 L339.7 1275.8 L342.2 1269.7 L344.6 1263.6 L347.1 1257.4 L349.6 1251.3 L352.1 1245.2 L354.7 1239.1 L357.3 1233 L359.9 1226.9 L362.5 1220.9 L365.2 1214.8 L367.9 1208.8 L370.6 1202.7 L373.3 1196.7 L376.1 1190.7 L378.9 1184.7 L381.7 1178.7 L384.5 1172.7 L387.4 1166.8 L390.3 1160.8 L393.2 1154.9 L396.1 1149 L399.1 1143.1 L402.1 1137.2 L405.1 1131.3 L408.1 1125.4 L411.2 1119.5 L414.3 1113.7 L417.4 1107.8 L420.5 1102 L423.7 1096.2 L426.9 1090.4 L430.1 1084.6 L433.3 1078.9 L436.6 1073.1 L439.9 1067.4 L443.2 1061.7 L446.5 1055.9 L449.9 1050.3 L453.3 1044.6 L456.7 1038.9 L460.1 1033.2 L463.6 1027.6 L467.1 1022 L470.6 1016.4 L474.1 1010.8 L477.7 1005.2 L481.2 999.6 L484.8 994.1 L488.5 988.6 L492.1 983 L495.8 977.5 L499.5 972 L503.2 966.6 L506.9 961.1 L510.7 955.7 L514.5 950.3 L518.3 944.9 L522.1 939.5 L526 934.1 L529.8 928.7 L533.7 923.4 L537.7 918.1 L541.6 912.8 L545.6 907.5 L549.6 902.2 L553.6 896.9 L557.6 891.7 L561.7 886.5 L565.8 881.3 L569.9 876.1 L574 870.9 L578.1 865.8 L582.3 860.6 L586.5 855.5 L590.7 850.4 L594.9 845.3 L599.2 840.3 L603.5 835.2 L607.8 830.2 L612.1 825.2 L616.4 820.2 L620.8 815.2 L625.2 810.3 L629.6 805.3 L634 800.4 L638.4 795.5 L642.9 790.6 L647.4 785.8 L651.9 780.9 L656.4 776.1 L661 771.3 L665.5 766.5 L670.1 761.8 L674.7 757 L679.4 752.3 L684 747.6 L688.7 742.9 L693.4 738.2 L698.1 733.6 L702.8 729 L707.6 724.4 L712.3 719.8 L717.1 715.2 L721.9 710.7 L726.8 706.1 L731.6 701.6 L736.5 697.2 L741.3 692.7 L746.2 688.3 L751.2 683.8 L756.1 679.4 L761.1 675.1 L766 670.7 L771 666.4 L776.1 662.1 L781.1 657.8 L786.1 653.5 L791.2 649.3 L796.3 645 L801.4 640.8 L806.5 636.6 L811.7 632.5 L816.8 628.3 L822 624.2 L827.2 620.1 L832.4 616 L837.6 612 L842.9 608 L848.1 604 L853.4 600 L858.7 596 L864 592.1 L869.3 588.1 L874.7 584.3 L880.1 580.4 L885.4 576.5 L890.8 572.7 L896.2 568.9 L901.7 565.1 L907.1 561.4 L912.6 557.6 L918 553.9 L923.5 550.2 L929 546.6 L934.6 542.9 L940.1 539.3 L945.7 535.7 L951.2 532.1 L956.8 528.6 L962.4 525.1 L968 521.6 L973.6 518.1 L979.3 514.7 L984.9 511.2 L990.6 507.8 L996.3 504.4 L1002 501.1 L1007.7 497.8 L1013.4 494.5 L1019.2 491.2 L1024.9 487.9 L1030.7 484.7 L1036.5 481.5 L1042.3 478.3 L1048.1 475.1 L1053.9 472 L1059.8 468.9 L1065.6 465.8 L1071.5 462.8 L1077.4 459.7 L1083.3 456.7 L1089.2 453.7 L1095.1 450.8 L1101 447.8 L1106.9 444.9 L1112.9 442 L1118.9 439.2 L1124.8 436.4 L1130.8 433.5 L1136.8 430.8 L1142.8 428 L1148.9 425.3 L1154.9 422.6 L1160.9 419.9 L1167 417.2" stroke="#4c84fb" stroke-width="8.2" fill="none" stroke-linecap="butt"/>
<path d="M1168.3 420.2 L1173.8 417.8 L1179.3 415.4 L1184.8 413.1 L1190.3 410.8 L1195.8 408.5 L1201.4 406.2 L1206.9 404 L1212.5 401.7 L1218 399.5 L1223.6 397.3 L1229.2 395.2 L1234.8 393 L1240.4 390.9 L1246 388.8 L1251.6 386.7 L1257.2 384.7 L1262.9 382.6 L1268.5 380.6 L1274.1 378.6 L1279.8 376.6 L1285.5 374.7 L1291.1 372.8 L1296.8 370.9 L1302.5 369 L1308.2 367.1 L1313.9 365.3 L1319.6 363.5 L1325.3 361.7 L1331 359.9 L1336.7 358.1" stroke="#6a78e8" stroke-width="3.2" fill="none"/>
<path d="M1166.5 416 L1172 413.7 L1177.5 411.3 L1183 408.9 L1188.6 406.6 L1194.1 404.3 L1199.7 402 L1205.2 399.8 L1210.8 397.6 L1216.4 395.3 L1222 393.1 L1227.6 391 L1233.2 388.8 L1238.8 386.7 L1244.4 384.6 L1250.1 382.5 L1255.7 380.4 L1261.3 378.4 L1267 376.4 L1272.7 374.4 L1278.3 372.4 L1284 370.4 L1289.7 368.5 L1295.4 366.6 L1301.1 364.7 L1306.8 362.8 L1312.5 361 L1318.2 359.2 L1324 357.4 L1329.7 355.6 L1335.4 353.8" stroke="#a9468a" stroke-width="7" fill="none"/>
<path d="M2050.4 310.2 L2057.5 311.4 L2064.7 312.7 L2071.9 314 L2079.1 315.4 L2086.2 316.8 L2093.4 318.2 L2100.5 319.6 L2107.7 321.1 L2114.8 322.6 L2121.9 324.2 L2129 325.7 L2136.1 327.4 L2143.2 329 L2150.3 330.7 L2157.4 332.4 L2164.5 334.2 L2171.6 335.9 L2178.6 337.8 L2185.7 339.6 L2192.7 341.5 L2199.8 343.4 L2206.8 345.3 L2213.8 347.3 L2220.8 349.3 L2227.8 351.4 L2234.8 353.5 L2241.8 355.6 L2248.8 357.7 L2255.7 359.9 L2262.7 362.1 L2269.6 364.3 L2276.5 366.6 L2283.5 368.9 L2290.4 371.3 L2297.3 373.6 L2304.2 376 L2311 378.5 L2317.9 380.9 L2324.7 383.4 L2331.6 386 L2338.4 388.5 L2345.2 391.1 L2352 393.8 L2358.8 396.4 L2365.6 399.1 L2372.4 401.8 L2379.1 404.6 L2385.8 407.4 L2392.6 410.2 L2399.3 413 L2406 415.9 L2412.7 418.8 L2419.3 421.8 L2426 424.8 L2432.6 427.8 L2439.3 430.8 L2445.9 433.9 L2452.5 437 L2459.1 440.1 L2465.6 443.3 L2472.2 446.5 L2478.7 449.7 L2485.3 452.9 L2491.8 456.2 L2498.3 459.5 L2504.7 462.9 L2511.2 466.2 L2517.7 469.7 L2524.1 473.1 L2530.5 476.6 L2536.9 480.1 L2543.3 483.6 L2549.7 487.1 L2556 490.7 L2562.3 494.3 L2568.7 498 L2575 501.7 L2581.2 505.4 L2587.5 509.1 L2593.7 512.9 L2600 516.6 L2606.2 520.5 L2612.4 524.3 L2618.6 528.2 L2624.7 532.1 L2630.8 536 L2637 540 L2643.1 544 L2649.1 548 L2655.2 552.1 L2661.3 556.2 L2667.3 560.3 L2673.3 564.4 L2679.3 568.6 L2685.2 572.8 L2691.2 577 L2697.1 581.2 L2703 585.5 L2708.9 589.8 L2714.8 594.1 L2720.6 598.5 L2726.4 602.9 L2732.3 607.3 L2738 611.7 L2743.8 616.2 L2749.5 620.7 L2755.3 625.2 L2761 629.8 L2766.6 634.3 L2772.3 638.9 L2777.9 643.6 L2783.5 648.2 L2789.1 652.9 L2794.7 657.6 L2800.3 662.3 L2805.8 667.1 L2811.3 671.9 L2816.8 676.7 L2822.2 681.5 L2827.7 686.4 L2833.1 691.3 L2838.5 696.2 L2843.8 701.1 L2849.2 706.1 L2854.5 711.1 L2859.8 716.1 L2865.1 721.1 L2870.3 726.2 L2875.5 731.3 L2880.7 736.4 L2885.9 741.5 L2891.1 746.7 L2896.2 751.9 L2901.3 757.1 L2906.4 762.3 L2911.4 767.5 L2916.5 772.8 L2921.5 778.1 L2926.5 783.5 L2931.4 788.8 L2936.3 794.2 L2941.3 799.6 L2946.1 805 L2951 810.4 L2955.8 815.9 L2960.6 821.4 L2965.4 826.9 L2970.2 832.4 L2974.9 838 L2979.6 843.5" stroke="#4c84fb" stroke-width="8.2" fill="none"/>
<rect x="0" y="0" width="2724" height="175" fill="#f2f2f2"/>
<rect x="0" y="173" width="2724" height="2" fill="#e1e1e1"/>
<rect x="0" y="0" width="394" height="11" fill="#c9c9c9"/>
<rect x="2086" y="0" width="638" height="11" fill="#c9c9c9"/>
<rect x="2094" y="0" width="56" height="11" fill="#b9b9b9"/>
<rect x="24.5" y="32.5" width="217" height="120" rx="8" fill="#f2f2f2" stroke="#dedede" stroke-width="3"/>
<text x="84.3" y="100.8" font-size="22.9" fill="#2b2b2b" font-weight="bold" textLength="75" lengthAdjust="spacingAndGlyphs">DESIGN</text>
<path d="M170.2 89.5 H181.9 L176.1 96.8 Z" fill="#333"/>
<text x="288.8" y="40.8" font-size="22.9" fill="#3d3d3d" font-weight="normal" textLength="58.6" lengthAdjust="spacingAndGlyphs" stroke="#3d3d3d" stroke-width="0.6">SOLID</text>
<text x="444" y="40.8" font-size="22.9" fill="#3d3d3d" font-weight="normal" textLength="94" lengthAdjust="spacingAndGlyphs" stroke="#3d3d3d" stroke-width="0.6">SURFACE</text>
<text x="630" y="40.8" font-size="22.9" fill="#3d3d3d" font-weight="normal" textLength="135" lengthAdjust="spacingAndGlyphs" stroke="#3d3d3d" stroke-width="0.6">SHEET METAL</text>
<text x="856" y="40.8" font-size="22.9" fill="#3d3d3d" font-weight="normal" textLength="70" lengthAdjust="spacingAndGlyphs" stroke="#3d3d3d" stroke-width="0.6">TOOLS</text>
<rect x="998" y="11" width="134" height="44" fill="#cde8f5"/>
<rect x="998" y="48" width="134" height="7" fill="#0696d7"/>
<text x="1025" y="40.8" font-size="22.9" fill="#0a8fd0" font-weight="normal" textLength="81" lengthAdjust="spacingAndGlyphs" stroke="#0a8fd0" stroke-width="0.7">SKETCH</text>
<text x="459.4" y="162.8" font-size="22.9" fill="#3d3d3d" font-weight="normal" textLength="75.4" lengthAdjust="spacingAndGlyphs" stroke="#3d3d3d" stroke-width="0.6">CREATE</text>
<path d="M542 149.5 H553.7 L547.9 156.8 Z" fill="#333"/>
<text x="867" y="162.8" font-size="22.9" fill="#3d3d3d" font-weight="normal" textLength="75.5" lengthAdjust="spacingAndGlyphs" stroke="#3d3d3d" stroke-width="0.6">MODIFY</text>
<path d="M951 149.5 H961.5 L956.2 156 Z" fill="#333"/>
<text x="1454.6" y="162.8" font-size="22.9" fill="#3d3d3d" font-weight="normal" textLength="142.7" lengthAdjust="spacingAndGlyphs" stroke="#3d3d3d" stroke-width="0.6">CONSTRAINTS</text>
<path d="M1604.5 149.5 H1616 L1610.2 156.6 Z" fill="#333"/>
<text x="2051.7" y="162.8" font-size="22.9" fill="#3d3d3d" font-weight="normal" textLength="82.6" lengthAdjust="spacingAndGlyphs" stroke="#3d3d3d" stroke-width="0.6">INSPECT</text>
<path d="M2141 149.5 H2152.5 L2146.8 156.6 Z" fill="#333"/>
<text x="2210.7" y="162.8" font-size="22.9" fill="#3d3d3d" font-weight="normal" textLength="68.3" lengthAdjust="spacingAndGlyphs" stroke="#3d3d3d" stroke-width="0.6">INSERT</text>
<path d="M2286 149.5 H2297.3 L2291.7 156.5 Z" fill="#333"/>
<text x="2348.6" y="162.8" font-size="22.9" fill="#3d3d3d" font-weight="normal" textLength="75.2" lengthAdjust="spacingAndGlyphs" stroke="#3d3d3d" stroke-width="0.6">SELECT</text>
<path d="M2430.6 149.5 H2442 L2436.3 156.6 Z" fill="#333"/>
<rect x="774" y="64" width="3" height="102" fill="#dcdcdc"/>
<rect x="1054.5" y="64" width="3" height="102" fill="#dcdcdc"/>
<rect x="2022.3" y="64" width="3" height="102" fill="#dcdcdc"/>
<rect x="2180.2" y="64" width="3" height="102" fill="#dcdcdc"/>
<rect x="2318.6" y="64" width="3" height="102" fill="#dcdcdc"/>
<rect x="2476" y="55" width="206" height="118" fill="#cfe8f4"/>
<text x="2496.7" y="162.8" font-size="22.9" fill="#2f2f3f" font-weight="normal" textLength="145.9" lengthAdjust="spacingAndGlyphs" stroke="#2f2f3f" stroke-width="0.6">FINISH SKETCH</text>
<path d="M2649.5 149.5 H2662 L2655.8 157.2 Z" fill="#333"/>
<path d="M268 112 L302 112" stroke="#5a5a5a" stroke-width="2.2" fill="none"/>
<path d="M309 81.5 A15.5 15.5 0 0 1 309 112.5" stroke="#7d7d7d" stroke-width="2" fill="none"/>
<rect x="261.8" y="108.8" width="6.5" height="6.5" fill="#1a8fe0"/>
<rect x="301.6" y="108.8" width="6.5" height="6.5" fill="#1a8fe0"/>
<rect x="301.6" y="78.8" width="6.5" height="6.5" fill="#1a8fe0"/>
<path d="M354 75.7 H407.3 V112.5 M403.5 115.9 H350.8 V79" stroke="#5a5a5a" stroke-width="2.2" fill="none"/>
<rect x="347.6" y="72.5" width="6.5" height="6.5" fill="#1a8fe0"/>
<rect x="403.6" y="112.7" width="6.5" height="6.5" fill="#1a8fe0"/>
<circle cx="464.8" cy="95.4" r="30.5" stroke="#7a7a7a" stroke-width="2" fill="none"/>
<path d="M452 108.3 L461 99.3" stroke="#1a8fe0" stroke-width="2" fill="none"/>
<path d="M468.6 91.6 L478.5 81.7" stroke="#1a8fe0" stroke-width="2" fill="none"/>
<path d="M446.8 113.7 L450.3 103.1 L457.4 110.2 Z" fill="#1a8fe0"/>
<path d="M483.6 76.9 L480.1 87.5 L473 80.4 Z" fill="#1a8fe0"/>
<rect x="461.8" y="92.2" width="6.5" height="6.5" fill="#1a8fe0"/>
<path d="M522.8 122 C523.5 104 526 93 531 89 M539 88 C548 93 556 101 564 106 M573 104 C579 96 581 84 581.1 72" stroke="#6a6a6a" stroke-width="2" fill="none"/>
<rect x="519.5" y="122.5" width="6.5" height="6.5" fill="#1a8fe0"/>
<rect x="531.5" y="82.7" width="6.5" height="6.5" fill="#1a8fe0"/>
<rect x="565.4" y="104.5" width="6.5" height="6.5" fill="#1a8fe0"/>
<rect x="577.9" y="64.8" width="6.5" height="6.5" fill="#1a8fe0"/>
<path d="M606.6 126.3 L635 68 V126.3 Z" stroke="#5a5a5a" stroke-width="2" fill="none"/>
<path d="M638.6 68 V126.3 H667.1 Z" stroke="#1a8fe0" stroke-width="2" fill="none"/>
<path d="M692.8 68.9 L692.8 124.5" stroke="#5a5a5a" stroke-width="2.5" fill="none"/>
<path d="M755.1 68.9 L755.1 124.5" stroke="#5a5a5a" stroke-width="2.5" fill="none"/>
<path d="M700 85.9 L748 85.9" stroke="#1a8fe0" stroke-width="2.2" fill="none"/>
<path d="M695 85.9 L705 80.9 L705 90.9 Z" fill="#1a8fe0"/>
<path d="M753 85.9 L743 90.9 L743 80.9 Z" fill="#1a8fe0"/>
<path d="M840.1 65.8 L863.5 65.8" stroke="#5a5a5a" stroke-width="2.2" fill="none"/>
<path d="M837.5 65.8 A37 37 0 0 0 800.6 103" stroke="#1a8fe0" stroke-width="2" fill="none"/>
<path d="M800.6 104.8 L800.6 129" stroke="#5a5a5a" stroke-width="2.2" fill="none"/>
<rect x="880" y="59" width="76" height="75.7" fill="#0a96d6"/>
<path d="M886 69.9 H894 M898 69.9 H906 M910 69.9 H918" stroke="#8ec8fb" stroke-width="2.2"/>
<path d="M934.2 69.9 L950 69.9" stroke="#efdcc6" stroke-width="2.2" fill="none"/>
<path d="M922.3 65.2 L930 72.9 V103.2 L921.8 103.2 Z" fill="#fff"/>
<path d="M902.5 76.8 L921.8 96.5 V106 L918.5 111 L902 88.3 Z" fill="#fff"/>
<path d="M928 103 L932 107.5 L929 109 L926 105 Z" fill="#fff"/>
<rect x="921.8" y="101.3" width="6.2" height="5" fill="#0a96d6"/>
<ellipse cx="922.1" cy="118.7" rx="5.8" ry="8.4" stroke="#fff" stroke-width="3.6" fill="none"/>
<ellipse cx="938" cy="113.1" rx="5.8" ry="8.6" stroke="#fff" stroke-width="3.6" fill="none" transform="rotate(-52 938 113.1)"/>
<path d="M1035.9 73.3 H995.7 A23.2 23.2 0 0 0 995.7 119.7 H1035.9" stroke="#1a8fe0" stroke-width="2.2" fill="none"/>
<path d="M1035.9 83.6 H997.4 A13.1 13.1 0 0 0 997.4 109.8 H1035.9" stroke="#5a5a5a" stroke-width="2.2" fill="none"/>
<path d="M1109.5 68.9 L1109.5 103" stroke="#d02a2a" stroke-width="2.2" fill="none"/>
<path d="M1114.9 68.9 L1114.9 103" stroke="#5a5a5a" stroke-width="2.2" fill="none"/>
<path d="M1100.5 72 L1108.5 80" stroke="#d02a2a" stroke-width="2" fill="none"/>
<path d="M1100.5 83 L1108.5 91" stroke="#d02a2a" stroke-width="2" fill="none"/>
<path d="M1100.5 94 L1108.5 102" stroke="#d02a2a" stroke-width="2" fill="none"/>
<path d="M1093.9 109.6 L1128 109.6" stroke="#5a5a5a" stroke-width="2.2" fill="none"/>
<path d="M1093.9 115.5 L1128 115.5" stroke="#d02a2a" stroke-width="2.2" fill="none"/>
<path d="M1103 116.5 L1097 124.5" stroke="#d02a2a" stroke-width="2" fill="none"/>
<path d="M1112.5 116.5 L1106.5 124.5" stroke="#d02a2a" stroke-width="2" fill="none"/>
<path d="M1122 116.5 L1116 124.5" stroke="#d02a2a" stroke-width="2" fill="none"/>
<path d="M1168.7 65.3 L1168.7 122" stroke="#d02a2a" stroke-width="2.2" fill="none"/>
<rect x="1165.5" y="122.5" width="6.5" height="6.5" fill="#d02a2a"/>
<path d="M1174 125.8 L1229.8 125.8" stroke="#5a5a5a" stroke-width="2.2" fill="none"/>
<circle cx="1275.9" cy="103.5" r="23.9" stroke="#d02a2a" stroke-width="2" fill="none"/>
<path d="M1274.1 67 L1313.6 106.2" stroke="#5a5a5a" stroke-width="2" fill="none"/>
<rect x="1350" y="82.9" width="40" height="8" fill="#cc2828"/>
<rect x="1350" y="103" width="40" height="8" fill="#6a6a6a"/>
<path d="M1432.7 110.1 L1469.3 73.3" stroke="#d02a2a" stroke-width="2" fill="none"/>
<path d="M1442.5 120 L1479.3 83.2" stroke="#5a5a5a" stroke-width="2" fill="none"/>
<path d="M1516.1 81.4 L1557.4 122.7" stroke="#d02a2a" stroke-width="2" fill="none"/>
<path d="M1537.2 101.2 L1567.7 71.9" stroke="#5a5a5a" stroke-width="2" fill="none"/>
<path d="M1613 92 V83.5 A14.2 14.2 0 0 1 1641.4 83.5 V92" stroke="#d24a58" stroke-width="7" fill="none"/>
<path d="M1613 92 V83.5 A14.2 14.2 0 0 1 1641.4 83.5 V92" stroke="#e8a0a6" stroke-width="2.5" fill="none"/>
<rect x="1603.9" y="92.5" width="46.4" height="34.8" fill="#e08a90" stroke="#d24a58" stroke-width="2.5"/>
<path d="M1627 104.8 L1627 115.5" stroke="#c83c4a" stroke-width="2.2" fill="none"/>
<path d="M1714.1 77.5 L1687.5 121.7 H1740.5 Z" stroke="#d02a2a" stroke-width="2.1" fill="none" stroke-linejoin="miter"/>
<circle cx="1799.9" cy="96.7" r="27" stroke="#d02a2a" stroke-width="2" fill="none"/>
<circle cx="1799.9" cy="96.7" r="15.3" stroke="#6a6a6a" stroke-width="2" fill="none"/>
<path d="M1858.6 123.6 L1892.8 90.4" stroke="#5a5a5a" stroke-width="2" fill="none"/>
<path d="M1896.4 87.7 L1912.5 70.6" stroke="#d02a2a" stroke-width="2" fill="none" stroke-dasharray="7 3"/>
<path d="M1858.6 83.2 L1872 97.2" stroke="#2a2a2a" stroke-width="2.2" fill="none"/>
<path d="M1878.5 103.8 L1866.2 99 L1874.1 91.3 Z" fill="#2a2a2a"/>
<path d="M1961.9 77.8 H1946.6 V116.4 H1961.9" stroke="#d02a2a" stroke-width="2.2" fill="none"/>
<path d="M1986.2 77.8 H2001.1 V116.4 H1986.2" stroke="#5a5a5a" stroke-width="2.2" fill="none"/>
<path d="M1970.9 68.9 L1970.9 124.5" stroke="#d02a2a" stroke-width="2.2" fill="none" stroke-dasharray="14 5 8 5 14"/>
<path d="M2076.8 81.4 L2076.8 98.5" stroke="#5a5a5a" stroke-width="2" fill="none"/>
<path d="M2131 81.4 L2131 98.5" stroke="#5a5a5a" stroke-width="2" fill="none"/>
<path d="M2082 89.9 L2126 89.9" stroke="#5a5a5a" stroke-width="2" fill="none"/>
<path d="M2078 89.9 L2086 85.4 L2086 94.4 Z" fill="#5a5a5a"/>
<path d="M2130 89.9 L2122 94.4 L2122 85.4 Z" fill="#5a5a5a"/>
<rect x="2075.9" y="101.2" width="56" height="11.6" fill="#f5a300"/>
<path d="M2081 101 V106 M2088 101 V104 M2095 101 V106 M2102 101 V104 M2109 101 V106 M2116 101 V104 M2123 101 V106" stroke="#8c6a20" stroke-width="1.6"/>
<rect x="2223" y="68.1" width="55.7" height="55.4" fill="#88c8f8" stroke="#3b8dcd" stroke-width="2"/>
<path d="M2224 124 V103 C2230 92 2236 84 2242 86 C2248 88 2252 103 2258 108 C2263 101 2268 98 2272 103 L2278.7 108 V123.5 Z" fill="#3e91cc"/>
<circle cx="2263.8" cy="83" r="6" fill="#fffcd2"/>
<path d="M2371 72 L2406 69.5 L2425 87.5 L2389 89 Z" fill="#55c47d"/>
<path d="M2393 70 L2412 88" stroke="#3a9a5a" stroke-width="1.5" fill="none"/>
<path d="M2371 72 C2365 76 2364.5 80 2364.5 84 V119 L2379 124 M2364.5 90 L2380 101 M2389 89 C2384 91 2381 95 2381 100 V124" stroke="#5a5a5a" stroke-width="1.8" fill="none"/>
<path d="M2394 124.5 C2398 114 2405 108 2412 106 L2418 111 C2414 118 2404 124 2394 124.5 Z" fill="#94642a"/>
<path d="M2413 108 L2425.5 95" stroke="#777" stroke-width="4" fill="none"/>
<circle cx="2571.5" cy="96.7" r="25" fill="#66c700"/>
<path d="M2558.5 97 L2567.5 106 L2584.5 89" stroke="#fff" stroke-width="6.5" fill="none" stroke-linecap="square"/>
<path d="M1878 271.8 L2053.4 288.8" stroke="#151515" stroke-width="3" fill="none"/>
<path d="M1874.5 271.5 L1898.9 268.8 L1897.9 278.8 Z" fill="#151515"/>
<path d="M2050.5 288.5 L2026.1 291.2 L2027.1 281.2 Z" fill="#151515"/>
<path d="M2053.4 277.3 L2053.4 296.8" stroke="#151515" stroke-width="3" fill="none"/>
<path d="M1950 214 L1974.1 386.2" stroke="#151515" stroke-width="3" fill="none"/>
<path d="M1949.5 210.2 L1957.8 233.3 L1947.9 234.7 Z" fill="#151515"/>
<path d="M1974.1 386.2 L1965.8 363.1 L1975.7 361.7 Z" fill="#151515"/>
<path d="M1949.5 210.2 L1969.7 210.2" stroke="#151515" stroke-width="3" fill="none"/>
<path d="M1876 274.5 L1877 271.3 L1878.1 268 L1879.4 264.9 L1880.8 261.7 L1882.3 258.6 L1883.9 255.6 L1885.6 252.7 L1887.4 249.8 L1889.4 247 L1891.5 244.2 L1893.6 241.6 L1895.9 239 L1898.2 236.5 L1900.7 234.1 L1903.2 231.8 L1905.8 229.6 L1908.5 227.5 L1911.3 225.5 L1914.2 223.6 L1917.1 221.9 L1920.1 220.2 L1923.2 218.7 L1926.3 217.2 L1929.4 215.9 L1932.7 214.8 L1935.9 213.7 L1939.2 212.8 L1942.5 212 L1945.9 211.3 L1949.3 210.7" stroke="#151515" stroke-width="3" fill="none"/>
<path d="M1874.8 276 L1878.8 253.8 L1888 257.7 Z" fill="#151515"/>
<text x="1938.7" y="266.5" font-size="31" fill="#3a3a3a" textLength="56" lengthAdjust="spacingAndGlyphs" transform="rotate(6 1938.7 266.5)">2.00</text>
<text x="1976" y="301" font-size="31" fill="#3a3a3a" textLength="79" lengthAdjust="spacingAndGlyphs" transform="rotate(82 1976 301)">Ø2.00</text>
<rect x="1323.3" y="432.3" width="273.2" height="27.2" fill="#efefef" stroke="#6c6c6c" stroke-width="2"/>
<text x="1329.4" y="454.3" font-size="22.6" fill="#000" font-weight="normal" textLength="258.5" lengthAdjust="spacingAndGlyphs">Select curve section to trim</text>
<rect x="2557.5" y="250.5" width="103.5" height="103.5" fill="#c9cac4" fill-opacity="0.78" stroke="#85877f" stroke-width="2"/>
<rect x="2576" y="269" width="65.5" height="65.5" fill="#aeb3b3" fill-opacity="0.55"/>
<text x="2588" y="312.6" font-size="31.5" fill="#81878b" font-weight="bold" textLength="43" lengthAdjust="spacingAndGlyphs">TOP</text>
<path d="M2545 233 L2551 244 L2557.5 233 M2551 244 V254.4" stroke="#42c842" stroke-width="2.4" fill="none"/>
<path d="M2551 248 H2557" stroke="#42c842" stroke-width="2.4"/>
<path d="M2671.5 248 L2684 269.5 M2684 248 L2671.5 269.5 M2662 259.7 H2667" stroke="#e04848" stroke-width="2.4" fill="none"/>
<path d="M2558.5 357 H2573 L2558.5 380 H2573.5 M2567 355 V361" stroke="#4b4bdc" stroke-width="2.6" fill="none"/>
<rect x="2684" y="423.3" width="40" height="349.2" fill="#f2f2f2"/>
<path d="M2694.9 444.6 L2704 438.4 V450.8 Z M2704.5 444.6 L2714 438.4 V450.8 Z" fill="#2a2a2a"/>
<text x="2696.3" y="462.6" font-size="22.5" fill="#3a3a4a" textLength="164.7" lengthAdjust="spacingAndGlyphs" transform="rotate(90 2696.3 462.6)">SKETCH PALETTE</text>
<rect x="9" y="183.8" width="598" height="47.8" fill="#f2f2f2" stroke="#d6d6d6" stroke-width="1.8"/>
<path d="M17.8 208.8 L27.5 202.9 V214.8 Z M28 208.8 L38.3 202.9 V214.8 Z" fill="#2b2b2b"/>
<text x="58.6" y="214.6" font-size="23.2" fill="#5a5a5a" font-weight="normal" textLength="103.1" lengthAdjust="spacingAndGlyphs">BROWSER</text>
<circle cx="575" cy="208" r="9.2" fill="#2e2e2e"/>
<rect x="569" y="206.5" width="12" height="3" fill="#f2f2f2"/>
<path d="M599 197 V219 M603 201 V214.6" stroke="#777" stroke-width="2"/>
<defs><linearGradient id="tg" x1="0" y1="0" x2="1" y2="1"><stop offset="0" stop-color="#f5f5f5"/><stop offset="1" stop-color="#333"/></linearGradient></defs>
<path d="M43 273.5 L62.5 252 V273.5 Z" fill="url(#tg)" stroke="#1e1e1e" stroke-width="2"/>
<rect x="80.1" y="243" width="295.9" height="39.7" fill="#f2f2f2"/>
<path d="M86.3 262.6 C91.3 249.6 113.3 249.6 118.3 262.6 C113.3 275.6 91.3 275.6 86.3 262.6 Z" fill="#9c9c9c"/><circle cx="102.3" cy="262.6" r="5.6" fill="none" stroke="#f2f2f2" stroke-width="2.6"/>
<rect x="130.1" y="247.1" width="195.8" height="31.6" fill="#999999"/>
<path d="M138 254 L144 248 H166.5 V272.5 L160.5 278.3 H138 Z" fill="#dde0e4" stroke="#1f2328" stroke-width="2.2"/>
<path d="M144 248 V254 H138 M160.5 254 V278.3 M144 254 H160.5 L166.5 248" stroke="#1f2328" stroke-width="0" fill="none"/>
<path d="M160.5 254 L166.5 248 V272.5 L160.5 278.3 Z" fill="#c7cbd2"/>
<path d="M138 254 H160.5 V278.3" stroke="#9aa0a8" stroke-width="1" fill="none"/>
<text x="196.5" y="270.9" font-size="22.6" fill="#ffffff" font-weight="normal" textLength="109" lengthAdjust="spacingAndGlyphs" stroke="#ffffff" stroke-width="0.9">(Unsaved)</text>
<circle cx="347.1" cy="263.7" r="11.8" fill="none" stroke="#2a2a2a" stroke-width="2.2"/>
<circle cx="347.1" cy="263.7" r="5" fill="#1a1a1a"/>
<path d="M79.8 300.5 L97.8 311.5 L79.8 322.5 Z" fill="#e6e6e6" stroke="#2f2f2f" stroke-width="2.2" stroke-linejoin="round"/>
<rect x="116" y="291" width="268" height="39.6" fill="#f2f2f2"/>
<rect x="-2.9" y="-16" width="5.8" height="6" transform="translate(138 310.8) rotate(0)" fill="#999999"/><rect x="-2.9" y="-16" width="5.8" height="6" transform="translate(138 310.8) rotate(45)" fill="#999999"/><rect x="-2.9" y="-16" width="5.8" height="6" transform="translate(138 310.8) rotate(90)" fill="#999999"/><rect x="-2.9" y="-16" width="5.8" height="6" transform="translate(138 310.8) rotate(135)" fill="#999999"/><rect x="-2.9" y="-16" width="5.8" height="6" transform="translate(138 310.8) rotate(180)" fill="#999999"/><rect x="-2.9" y="-16" width="5.8" height="6" transform="translate(138 310.8) rotate(225)" fill="#999999"/><rect x="-2.9" y="-16" width="5.8" height="6" transform="translate(138 310.8) rotate(270)" fill="#999999"/><rect x="-2.9" y="-16" width="5.8" height="6" transform="translate(138 310.8) rotate(315)" fill="#999999"/>
<circle cx="138" cy="310.8" r="8.1" fill="none" stroke="#999999" stroke-width="7.8"/>
<text x="182" y="318.7" font-size="22.2" fill="#2d2d33" font-weight="normal" textLength="179" lengthAdjust="spacingAndGlyphs">Document Settings</text>
<path d="M79.8 348.5 L97.8 359.5 L79.8 370.5 Z" fill="#e6e6e6" stroke="#2f2f2f" stroke-width="2.2" stroke-linejoin="round"/>
<rect x="116" y="339" width="220" height="40" fill="#f2f2f2"/>
<rect x="122" y="345" width="14" height="2" fill="#cacaca"/><rect x="122" y="347" width="14" height="2.5" fill="#8e8e8e"/><rect x="122" y="349.5" width="14" height="2" fill="#b0b0b0"/><path d="M122 353 H137.5 L140 349 H154 V371 H122 Z" fill="#999999"/><rect x="140" y="347.2" width="14" height="1.6" fill="#cfcfcf"/><rect x="122" y="371" width="32" height="2" fill="#cfcfcf"/>
<text x="182" y="367" font-size="22.2" fill="#2d2d33" font-weight="normal" textLength="136" lengthAdjust="spacingAndGlyphs">Named Views</text>
<path d="M79.8 396.5 L97.8 407.5 L79.8 418.5 Z" fill="#e6e6e6" stroke="#2f2f2f" stroke-width="2.2" stroke-linejoin="round"/>
<rect x="116" y="387" width="190" height="40" fill="#f2f2f2"/>
<g opacity="0.35"><path d="M122 407 C127 394 149 394 154 407 C149 420 127 420 122 407 Z" fill="#bdbdbd"/><circle cx="138" cy="407" r="5.6" fill="none" stroke="#f2f2f2" stroke-width="2.6"/><path d="M126 396 L150 418" stroke="#cfcfcf" stroke-width="3"/></g>
<rect x="172" y="393" width="14" height="2" fill="#cacaca"/><rect x="172" y="395" width="14" height="2.5" fill="#8e8e8e"/><rect x="172" y="397.5" width="14" height="2" fill="#b0b0b0"/><path d="M172 401 H187.5 L190 397 H204 V419 H172 Z" fill="#999999"/><rect x="190" y="395.2" width="14" height="1.6" fill="#cfcfcf"/><rect x="172" y="419" width="32" height="2" fill="#cfcfcf"/>
<text x="232.5" y="415.2" font-size="22.2" fill="#2d2d33" font-weight="normal" textLength="54.5" lengthAdjust="spacingAndGlyphs">Origin</text>
<path d="M79.8 444.5 L97.8 455.5 L79.8 466.5 Z" fill="#e6e6e6" stroke="#2f2f2f" stroke-width="2.2" stroke-linejoin="round"/>
<rect x="116" y="435" width="206" height="39.5" fill="#f2f2f2"/>
<path d="M122 454.8 C127 441.8 149 441.8 154 454.8 C149 467.8 127 467.8 122 454.8 Z" fill="#9c9c9c"/><circle cx="138" cy="454.8" r="5.6" fill="none" stroke="#f2f2f2" stroke-width="2.6"/>
<rect x="172" y="440.8" width="14" height="2" fill="#cacaca"/><rect x="172" y="442.8" width="14" height="2.5" fill="#8e8e8e"/><rect x="172" y="445.2" width="14" height="2" fill="#b0b0b0"/><path d="M172 448.8 H187.5 L190 444.8 H204 V466.8 H172 Z" fill="#999999"/><rect x="190" y="442.9" width="14" height="1.6" fill="#cfcfcf"/><rect x="172" y="466.8" width="32" height="2" fill="#cfcfcf"/>
<text x="232.5" y="463" font-size="22.2" fill="#2d2d33" font-weight="normal" textLength="64.5" lengthAdjust="spacingAndGlyphs">Bodies</text>
<path d="M79.8 492.5 L97.8 503.5 L79.8 514.5 Z" fill="#e6e6e6" stroke="#2f2f2f" stroke-width="2.2" stroke-linejoin="round"/>
<rect x="116" y="483" width="229.6" height="40" fill="#f2f2f2"/>
<path d="M122 503 C127 490 149 490 154 503 C149 516 127 516 122 503 Z" fill="#9c9c9c"/><circle cx="138" cy="503" r="5.6" fill="none" stroke="#f2f2f2" stroke-width="2.6"/>
<rect x="172" y="489" width="14" height="2" fill="#cacaca"/><rect x="172" y="491" width="14" height="2.5" fill="#8e8e8e"/><rect x="172" y="493.5" width="14" height="2" fill="#b0b0b0"/><path d="M172 497 H187.5 L190 493 H204 V515 H172 Z" fill="#999999"/><rect x="190" y="491.2" width="14" height="1.6" fill="#cfcfcf"/><rect x="172" y="515" width="32" height="2" fill="#cfcfcf"/>
<text x="232.5" y="511" font-size="22.2" fill="#2d2d33" font-weight="normal" textLength="88.5" lengthAdjust="spacingAndGlyphs">Sketches</text>
</svg></body></html>
